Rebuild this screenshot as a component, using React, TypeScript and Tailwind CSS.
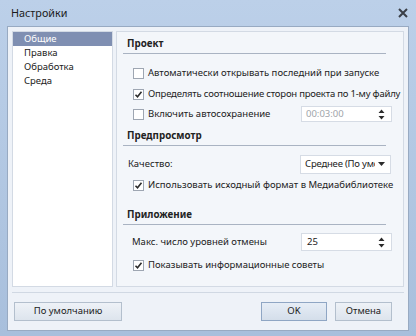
import React from 'react';

function CheckBox({ checked }: { checked?: boolean }) {
  return (
    <span className="w-[11px] h-[11px] shrink-0 border border-[#9ea6b2] bg-white flex items-center justify-center">
      {checked && (
        <svg width="9" height="9" viewBox="0 0 9 9">
          <path d="M1.5 4.8 L3.5 6.8 L7.5 1.8" fill="none" stroke="#2b2b2b" strokeWidth="1.6" />
        </svg>
      )}
    </span>
  );
}

function CheckRow({ label, checked, className }: { label: string; checked?: boolean; className: string }) {
  return (
    <div className={`flex items-center gap-[4px] pl-[10px] h-[20px] ${className}`}>
      <CheckBox checked={checked} />
      <span className="whitespace-nowrap">{label}</span>
    </div>
  );
}

function Heading({ title, className }: { title: string; className: string }) {
  return (
    <div className={`h-[18px] mr-[17px] border-b border-[#a9b3c2] pl-[4px] flex items-center font-bold text-[9.8px] ${className}`}>
      {title}
    </div>
  );
}

function Spin() {
  return (
    <svg width="7" height="11" viewBox="0 0 7 11" className="shrink-0">
      <path d="M3.5 0.5 L6.5 4 L0.5 4 Z M0.5 7 L6.5 7 L3.5 10.5 Z" fill="#2b2b2b" />
    </svg>
  );
}

export default function App() {
  const items = ['Общие', 'Правка', 'Обработка', 'Среда'];

  return (
    <div className="w-[416px] h-[336px] flex flex-col bg-gradient-to-b from-[#bcd0e9] to-[#a8bfdc] font-['Noto_Sans',sans-serif] text-[9.5px] text-[#222]">
      <div className="h-[26px] shrink-0 flex items-center justify-between pl-[11px] pr-[8px]">
        <span className="text-[10.8px] text-[#1a1a1a]">Настройки</span>
        <svg width="10" height="10" viewBox="0 0 10 10">
          <path d="M1 1 L9 9 M9 1 L1 9" stroke="#3a3f47" strokeWidth="2" />
        </svg>
      </div>

      <div className="mx-[7px] mb-[6px] flex-1 bg-[#eef2f8] border border-[#98aac2] flex flex-col px-[4px] pt-[4px]">
        <div className="flex gap-[3px] h-[256px]">
          <div className="w-[101px] shrink-0 bg-white border border-[#d3dae4] flex flex-col">
            {items.map((it, i) => (
              <div
                key={it}
                className={`h-[14px] pl-[11px] flex items-center leading-none ${i === 0 ? 'bg-[#7f8fb2] text-white' : ''}`}
              >
                {it}
              </div>
            ))}
          </div>

          <div className="flex-1 min-w-0 bg-[#f3f6fa] border border-[#d3dae4] flex flex-col pl-[6px] pt-[4px]">
            <Heading title="Проект" className="" />
            <CheckRow className="mt-[9px]" label="Автоматически открывать последний при запуске" />
            <CheckRow className="mt-[1px] tracking-[-0.2px]" checked label="Определять соотношение сторон проекта по 1-му файлу" />
            <div className="flex items-center h-[20px]">
              <CheckRow className="" label="Включить автосохранение" />
              <div className="ml-auto mr-[11px] w-[91px] h-[16px] bg-white border border-[#d6dce5] flex items-center pl-[4px] pr-[6px] text-[#a0a4aa]">
                <span className="flex-1">00:03:00</span>
                <Spin />
              </div>
            </div>

            <Heading title="Предпросмотр" className="mt-[4px]" />
            <div className="flex items-center h-[20px] mt-[8px]">
              <span className="pl-[5px]">Качество:</span>
              <div className="ml-auto mr-[12px] w-[91px] h-[19px] bg-white border border-[#d6dce5] flex items-center pl-[4px] pr-[5px]">
                <span className="flex-1 min-w-0 overflow-hidden whitespace-nowrap tracking-[-0.2px]">Среднее (По умол</span>
                <svg width="7" height="4" viewBox="0 0 7 4" className="ml-[3px] shrink-0">
                  <path d="M0 0 L7 0 L3.5 4 Z" fill="#2b2b2b" />
                </svg>
              </div>
            </div>
            <CheckRow className="mt-[1px]" checked label="Использовать исходный формат в Медиабиблиотеке" />

            <Heading title="Приложение" className="mt-[12px]" />
            <div className="flex items-center h-[20px] mt-[7px]">
              <span className="pl-[9px]">Макс. число уровней отмены</span>
              <div className="ml-auto mr-[11px] w-[91px] h-[18px] bg-white border border-[#d6dce5] flex items-center pl-[5px] pr-[6px]">
                <span className="flex-1">25</span>
                <Spin />
              </div>
            </div>
            <CheckRow className="mt-[3px]" checked label="Показывать информационные советы" />
          </div>
        </div>

        <div className="mt-[5px] border-t border-[#d0d8e3] flex items-center h-[38px]">
          <button className="ml-[2px] w-[108px] h-[19px] bg-gradient-to-b from-[#eef2f7] to-[#dde4ed] border border-[#b3bfcd]">
            По умолчанию
          </button>
          <button className="ml-auto w-[66px] h-[19px] bg-gradient-to-b from-[#e6edf6] to-[#d4deea] border border-[#8fa6c4]">
            OK
          </button>
          <button className="ml-[8px] mr-[12px] w-[57px] h-[19px] bg-gradient-to-b from-[#eef2f7] to-[#dde4ed] border border-[#b3bfcd]">
            Отмена
          </button>
        </div>
      </div>
    </div>
  );
}
